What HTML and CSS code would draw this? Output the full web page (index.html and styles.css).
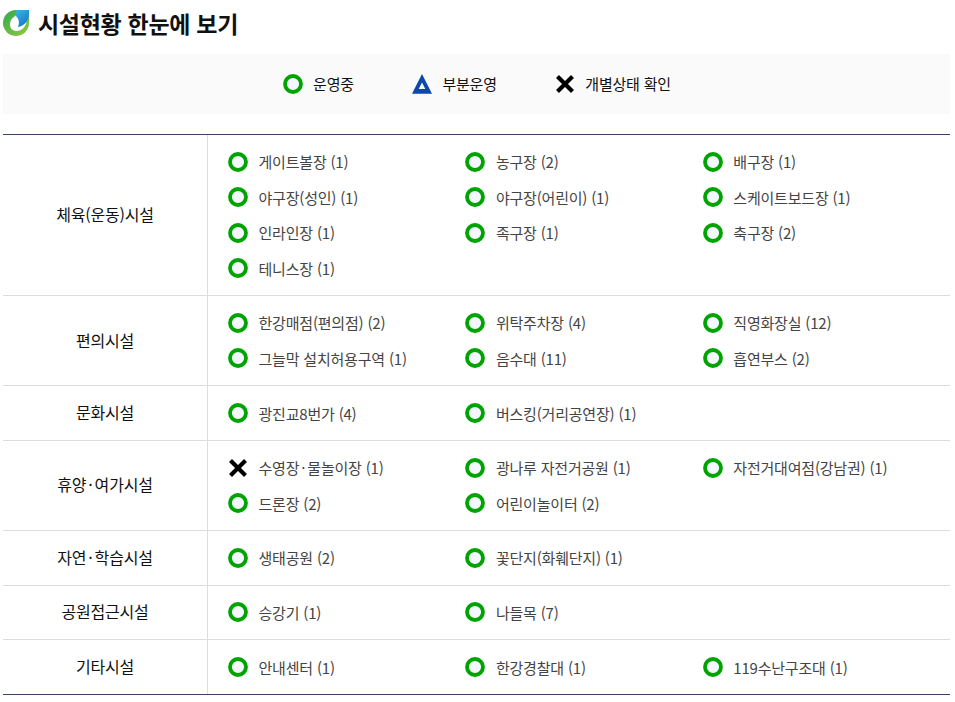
FILE: index.html
```html
<!DOCTYPE html>
<html lang="ko">
<head>
<meta charset="utf-8">
<title>시설현황 한눈에 보기</title>
<link rel="stylesheet" href="styles.css">
</head>
<body>
<svg width="0" height="0" class="defs">
  <defs>
    <symbol id="on" viewBox="0 0 20 20"><circle cx="10" cy="10" r="8" fill="#f4f7ff" stroke="#00a400" stroke-width="3.800"/></symbol>
    <symbol id="part" viewBox="0 0 20 20"><path d="M10 0 20 19.800H0ZM10 8.500 13.300 15H6.700Z" fill="#0d47a8" fill-rule="evenodd"/></symbol>
    <symbol id="off" viewBox="0 0 20 20"><path d="M2.500 2.500 17.500 17.500M17.500 2.500 2.500 17.500" fill="none" stroke="#000" stroke-width="4.200"/></symbol>
  </defs>
</svg>
<h1 class="title">
  <svg class="logo" viewBox="0 0 26 26"><defs><linearGradient id="g" x1="0" y1="0" x2=".8" y2="1"><stop offset="0" stop-color="#2fa84f"/><stop offset="1" stop-color="#8cc63f"/></linearGradient><linearGradient id="b" x1="0" y1="0" x2=".6" y2="1"><stop offset="0" stop-color="#3fb4e8"/><stop offset="1" stop-color="#1679c9"/></linearGradient></defs><path d="M26 0H13A13 13 0 1 0 26 13Z" fill="url(#g)"/><path d="M20 4C12 4 7 9 7 14.500 7 19 10.500 21.500 14.500 21 20 20.500 24 15 24 8Z" fill="#fff"/><path d="M26 0H14C12 3 12.500 6 14.500 8 16 10 16.500 13 15 17 21 16 26 11 26 4Z" fill="url(#b)"/></svg>
  시설현황 한눈에 보기
</h1>
<div class="legend">
  <span class="legend-item"><svg class="ico"><use href="#on"/></svg><span class="legend-text">운영중</span></span>
  <span class="legend-item"><svg class="ico"><use href="#part"/></svg><span class="legend-text">부분운영</span></span>
  <span class="legend-item"><svg class="ico"><use href="#off"/></svg><span class="legend-text">개별상태 확인</span></span>
</div>
<div class="table">
  <div class="row">
    <div class="head">체육(운동)시설</div>
    <ul class="cell">
      <li><svg class="ico"><use href="#on"/></svg>게이트볼장 (1)</li>
      <li><svg class="ico"><use href="#on"/></svg>농구장 (2)</li>
      <li><svg class="ico"><use href="#on"/></svg>배구장 (1)</li>
      <li><svg class="ico"><use href="#on"/></svg>야구장(성인) (1)</li>
      <li><svg class="ico"><use href="#on"/></svg>야구장(어린이) (1)</li>
      <li><svg class="ico"><use href="#on"/></svg>스케이트보드장 (1)</li>
      <li><svg class="ico"><use href="#on"/></svg>인라인장 (1)</li>
      <li><svg class="ico"><use href="#on"/></svg>족구장 (1)</li>
      <li><svg class="ico"><use href="#on"/></svg>축구장 (2)</li>
      <li><svg class="ico"><use href="#on"/></svg>테니스장 (1)</li>
    </ul>
  </div>
  <div class="row">
    <div class="head">편의시설</div>
    <ul class="cell">
      <li><svg class="ico"><use href="#on"/></svg>한강매점(편의점) (2)</li>
      <li><svg class="ico"><use href="#on"/></svg>위탁주차장 (4)</li>
      <li><svg class="ico"><use href="#on"/></svg>직영화장실 (12)</li>
      <li><svg class="ico"><use href="#on"/></svg>그늘막 설치허용구역 (1)</li>
      <li><svg class="ico"><use href="#on"/></svg>음수대 (11)</li>
      <li><svg class="ico"><use href="#on"/></svg>흡연부스 (2)</li>
    </ul>
  </div>
  <div class="row">
    <div class="head">문화시설</div>
    <ul class="cell">
      <li><svg class="ico"><use href="#on"/></svg>광진교8번가 (4)</li>
      <li><svg class="ico"><use href="#on"/></svg>버스킹(거리공연장) (1)</li>
    </ul>
  </div>
  <div class="row">
    <div class="head"><span>휴양<span class="dot">·</span>여가시설</span></div>
    <ul class="cell">
      <li><svg class="ico"><use href="#off"/></svg><span>수영장<span class="dot">·</span>물놀이장 (1)</span></li>
      <li><svg class="ico"><use href="#on"/></svg>광나루 자전거공원 (1)</li>
      <li><svg class="ico"><use href="#on"/></svg>자전거대여점(강남권) (1)</li>
      <li><svg class="ico"><use href="#on"/></svg>드론장 (2)</li>
      <li><svg class="ico"><use href="#on"/></svg>어린이놀이터 (2)</li>
    </ul>
  </div>
  <div class="row">
    <div class="head"><span>자연<span class="dot">·</span>학습시설</span></div>
    <ul class="cell">
      <li><svg class="ico"><use href="#on"/></svg>생태공원 (2)</li>
      <li><svg class="ico"><use href="#on"/></svg>꽃단지(화훼단지) (1)</li>
    </ul>
  </div>
  <div class="row">
    <div class="head">공원접근시설</div>
    <ul class="cell">
      <li><svg class="ico"><use href="#on"/></svg>승강기 (1)</li>
      <li><svg class="ico"><use href="#on"/></svg>나들목 (7)</li>
    </ul>
  </div>
  <div class="row">
    <div class="head">기타시설</div>
    <ul class="cell">
      <li><svg class="ico"><use href="#on"/></svg>안내센터 (1)</li>
      <li><svg class="ico"><use href="#on"/></svg>한강경찰대 (1)</li>
      <li><svg class="ico"><use href="#on"/></svg>119수난구조대 (1)</li>
    </ul>
  </div>
</div>
</body>
</html>
```
FILE: styles.css
```css
* { box-sizing: border-box; }
html, body { margin: 0; padding: 0; }
body {
  background: #fff;
  font-family: "Noto Sans CJK KR", "Noto Sans", sans-serif;
  font-size: 15px;
  letter-spacing: -0.2px;
  color: #444;
  padding: 0 5px 0 3px;
}
.defs { position: absolute; }
.title {
  display: flex;
  align-items: center;
  gap: 9px;
  height: 54px;
  margin: 0;
  padding-bottom: 8px;
  font-size: 23px;
  font-weight: 700;
  color: #111;
  letter-spacing: -0.3px;
}
.logo { width: 26px; height: 26px; flex: none; }
.legend {
  display: flex;
  justify-content: center;
  align-items: center;
  gap: 58.5px;
  height: 60px;
  padding-left: 1px;
  background: #fafafa;
  color: #111;
}
.legend-item { display: flex; align-items: center; gap: 10px; }
.legend-text { padding-bottom: 2px; }
.ico { width: 20px; height: 20px; flex: none; }
.dot { margin: 0 2px; }
.table {
  margin-top: 20px;
  border-top: 1px solid #3b4463;
  border-bottom: 1px solid #3b4463;
}
.row { display: flex; border-bottom: 1px solid #ddd; }
.row:last-child { border-bottom: 0; }
.head {
  flex: 0 0 205px;
  display: flex;
  align-items: center;
  justify-content: center;
  padding-bottom: 2px;
  border-right: 1px solid #ddd;
  font-size: 16px;
  color: #111;
}
.cell {
  flex: 1;
  display: grid;
  grid-template-columns: repeat(3, 237.4px);
  margin: 0;
  padding: 9.07px 0 9.07px 20px;
  list-style: none;
}
.cell li {
  display: flex;
  align-items: center;
  gap: 10.5px;
  height: 35.5px;
  white-space: nowrap;
}
```
